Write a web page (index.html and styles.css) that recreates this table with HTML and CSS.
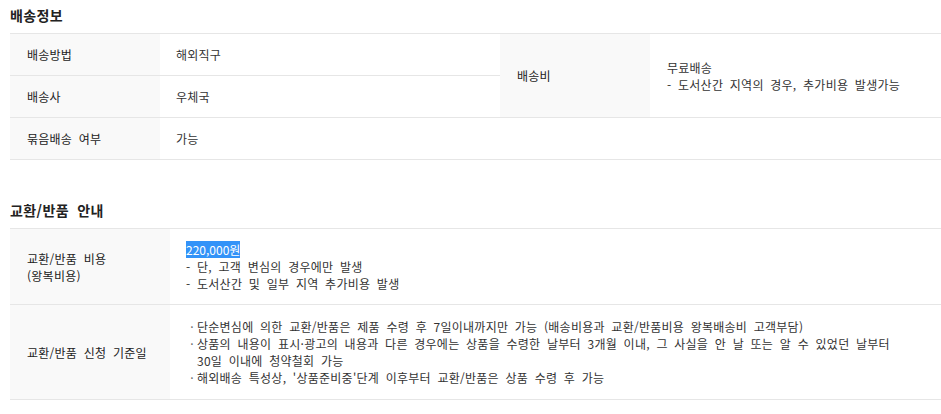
FILE: index.html
```html
<!DOCTYPE html>
<html lang="ko">
<head>
<meta charset="utf-8">
<link rel="stylesheet" href="styles.css">
</head>
<body>
<div class="page">
  <h2 class="title first">배송정보</h2>
  <table class="info ship">
    <colgroup><col class="c1"><col class="c2"><col class="c3"><col class="c4"></colgroup>
    <tr>
      <th>배송방법</th>
      <td>해외직구</td>
      <th rowspan="2">배송비</th>
      <td rowspan="2">무료배송<br>- 도서산간 지역의 경우, 추가비용 발생가능</td>
    </tr>
    <tr>
      <th>배송사</th>
      <td>우체국</td>
    </tr>
    <tr>
      <th>묶음배송 여부</th>
      <td>가능</td>
      <td class="empty"></td>
      <td class="empty"></td>
    </tr>
  </table>

  <h2 class="title second">교환/반품 안내</h2>
  <table class="info ret">
    <colgroup><col class="r1"><col class="r2"></colgroup>
    <tr class="cost">
      <th>교환/반품 비용<br>(왕복비용)</th>
      <td><span class="sel">220,000원</span><br>- 단, 고객 변심의 경우에만 발생<br>- 도서산간 및 일부 지역 추가비용 발생</td>
    </tr>
    <tr class="rule">
      <th>교환/반품 신청 기준일</th>
      <td>
        <ul class="bullets">
          <li>단순변심에 의한 교환/반품은 제품 수령 후 7일이내까지만 가능 (배송비용과 교환/반품비용 왕복배송비 고객부담)</li>
          <li>상품의 내용이 표시·광고의 내용과 다른 경우에는 상품을 수령한 날부터 3개월 이내, 그 사실을 안 날 또는 알 수 있었던 날부터<br>30일 이내에 청약철회 가능</li>
          <li>해외배송 특성상, '상품준비중'단계 이후부터 교환/반품은 상품 수령 후 가능</li>
        </ul>
      </td>
    </tr>
  </table>
</div>
</body>
</html>
```

FILE: styles.css
```css
* { box-sizing: border-box; }
html, body { margin: 0; padding: 0; background: #fff; }
body {
  font-family: "Noto Sans CJK KR", "Noto Sans", sans-serif;
  font-size: 12px;
  color: #333;
}
.page { padding-left: 10px; }
.title {
  margin: 0;
  font-size: 14px;
  line-height: 20px;
  font-weight: bold;
  color: #222;
  letter-spacing: 0.4px;
  word-spacing: 4px;
}
.title.first { padding-top: 5px; margin-bottom: 8px; }
.title.second { margin-top: 40px; margin-bottom: 8px; }

.info {
  width: 931px;
  border-collapse: collapse;
  table-layout: fixed;
  border-top: 1px solid #e6e6e6;
}
.info th, .info td {
  border-bottom: 1px solid #e6e6e6;
  text-align: left;
  vertical-align: middle;
  font-weight: normal;
  line-height: 17px;
  padding: 0 16px;
  white-space: nowrap;
  letter-spacing: 0.25px;
  word-spacing: 3px;
}
.info th {
  background: #f9f9f9;
  padding-left: 17px;
  color: #222;
}
.info td { color: #333; }
.ship tr { height: 42px; }
.ship td[rowspan] { padding-left: 17px; }
.ship .c1 { width: 150px; }
.ship .c2 { width: 340px; }
.ship .c3 { width: 150px; }
.ship .c4 { width: 291px; }

.ret .r1 { width: 160px; }
.ret .cost th, .ret .cost td { padding-top: 12px; padding-bottom: 12px; }
.ret .rule th, .ret .rule td { padding-top: 13px; padding-bottom: 13px; }

.sel {
  background: #3393f8;
  color: #fff;
  letter-spacing: 0;
}
.bullets { list-style: none; margin: 0; padding: 0; }
.bullets li {
  position: relative;
  padding-left: 11px;
}
.bullets li::before {
  content: "·";
  position: absolute;
  left: 1px;
  top: 0;
  width: 10px;
  text-align: center;
  color: #666;
}
```
